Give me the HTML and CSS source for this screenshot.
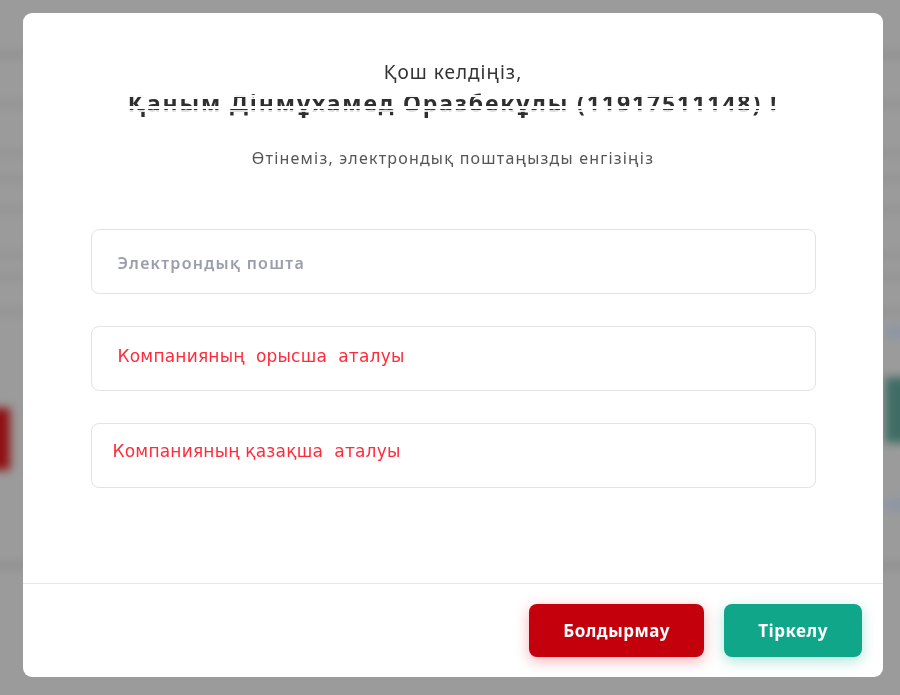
FILE: index.html
```html
<!DOCTYPE html>
<html lang="kk">
<head>
<meta charset="utf-8">
<title>Тіркелу</title>
<link rel="stylesheet" href="styles.css">
</head>
<body>
<div class="backdrop"></div>
<div class="overlay">
  <div class="modal">
    <div class="modal-body">
      <div class="greeting">Қош келдіңіз,</div>
      <div class="name">Қаным Дінмұхамед Оразбекұлы (11917511148) !</div>
      <div class="hint">Өтінеміз, электрондық поштаңызды енгізіңіз</div>
      <div class="fields">
        <div class="field"><span class="placeholder">Электрондық пошта</span></div>
        <div class="field"><span class="red-text first">Компанияның  орысша  аталуы</span></div>
        <div class="field"><span class="red-text second">Компанияның қазақша  аталуы</span></div>
      </div>
    </div>
    <div class="modal-footer">
      <button class="btn btn-cancel">Болдырмау</button>
      <button class="btn btn-ok">Тіркелу</button>
    </div>
  </div>
</div>
</body>
</html>
```
FILE: styles.css
```css
html, body {
  margin: 0;
  padding: 0;
  width: 900px;
  height: 695px;
  overflow: hidden;
  background: #9b9b9b;
  font-family: "Noto Sans", "Open Sans", sans-serif;
}

.backdrop {
  position: fixed;
  inset: -20px;
  filter: blur(5px);
  background:
    linear-gradient(#8e0f12, #8e0f12) 0 428px / 30px 62px no-repeat,
    linear-gradient(#3f6d65, #3f6d65) 905px 397px / 30px 66px no-repeat,
    linear-gradient(#8d96a4, #8d96a4) 905px 346px / 30px 12px no-repeat,
    linear-gradient(#8d96a4, #8d96a4) 905px 519px / 30px 12px no-repeat,
    linear-gradient(#8c8c8c, #8c8c8c) 0 72px / 100% 5px no-repeat,
    linear-gradient(#8e8e8e, #8e8e8e) 0 122px / 100% 4px no-repeat,
    linear-gradient(#8e8e8e, #8e8e8e) 0 171px / 100% 4px no-repeat,
    linear-gradient(#8e8e8e, #8e8e8e) 0 197px / 100% 4px no-repeat,
    linear-gradient(#8e8e8e, #8e8e8e) 0 228px / 100% 4px no-repeat,
    linear-gradient(#8e8e8e, #8e8e8e) 0 273px / 100% 4px no-repeat,
    linear-gradient(#8e8e8e, #8e8e8e) 0 295px / 100% 4px no-repeat,
    linear-gradient(#8e8e8e, #8e8e8e) 0 330px / 100% 4px no-repeat,
    linear-gradient(#8a8a8a, #8a8a8a) 0 583px / 100% 5px no-repeat,
    #9b9b9b;
}

.overlay {
  position: fixed;
  inset: 0;
  display: flex;
  align-items: flex-start;
}

.modal {
  margin: 13px 0 0 23px;
  width: 860px;
  height: 664px;
  background: #fff;
  border-radius: 9px;
  display: flex;
  flex-direction: column;
  overflow: hidden;
}

.modal-body {
  height: 571px;
  flex: none;
  border-bottom: 1px solid #e8e8ec;
  display: flex;
  flex-direction: column;
  align-items: center;
  box-sizing: border-box;
  padding-top: 47px;
}

.greeting {
  font-size: 19px;
  letter-spacing: 1px;
  color: #333;
  line-height: 24px;
}

.name {
  position: relative;
  margin-top: 5px;
  font-size: 23px;
  font-weight: 700;
  color: #2f2f2f;
  line-height: 28px;
  letter-spacing: 1.9px;
}

.name::after {
  content: "";
  position: absolute;
  inset: 0;
  background: linear-gradient(to bottom,
    rgba(255,255,255,0) 0 6px,
    rgba(255,255,255,0.95) 6px 8px,
    rgba(255,255,255,0) 8px 17px,
    #fff 17px 20px,
    rgba(255,255,255,0) 20px 21px,
    rgba(255,255,255,0.85) 21px 23px,
    rgba(255,255,255,0) 23px 28px);
}

.hint {
  margin-top: 31px;
  font-size: 16px;
  letter-spacing: 1.2px;
  color: #555;
  line-height: 20px;
}

.fields {
  margin-top: 61px;
  width: 725px;
  display: flex;
  flex-direction: column;
  gap: 32px;
}

.field {
  height: 65px;
  box-sizing: border-box;
  border: 1px solid #e2e2e8;
  border-radius: 8px;
  display: flex;
  align-items: center;
  padding-left: 26px;
}

.placeholder {
  font-size: 16px;
  font-weight: 600;
  letter-spacing: 1.3px;
  color: #9a9eac;
  margin-top: 2px;
}

.red-text {
  font-family: "DejaVu Sans", "Liberation Sans", sans-serif;
  font-size: 17px;
  letter-spacing: 0.2px;
  color: #ff2a3a;
  white-space: pre;
  margin-top: -6px;
}

.red-text.second {
  margin-left: -5px;
  margin-top: -10px;
}

.modal-footer {
  flex: 1;
  display: flex;
  justify-content: flex-end;
  align-items: flex-start;
  gap: 20px;
  padding: 20px 21px 0 0;
}

.btn {
  height: 53px;
  border: none;
  border-radius: 8px;
  color: #fff;
  font-family: "Noto Sans", "Open Sans", sans-serif;
  font-size: 17px;
  font-weight: 700;
  letter-spacing: 0.5px;
  cursor: pointer;
}

.btn-cancel {
  width: 175px;
  background: #c3000b;
  box-shadow: 0 4px 14px rgba(230, 30, 50, 0.35);
}

.btn-ok {
  width: 138px;
  background: #0fa68a;
  box-shadow: 0 4px 14px rgba(20, 180, 150, 0.35);
}
```
